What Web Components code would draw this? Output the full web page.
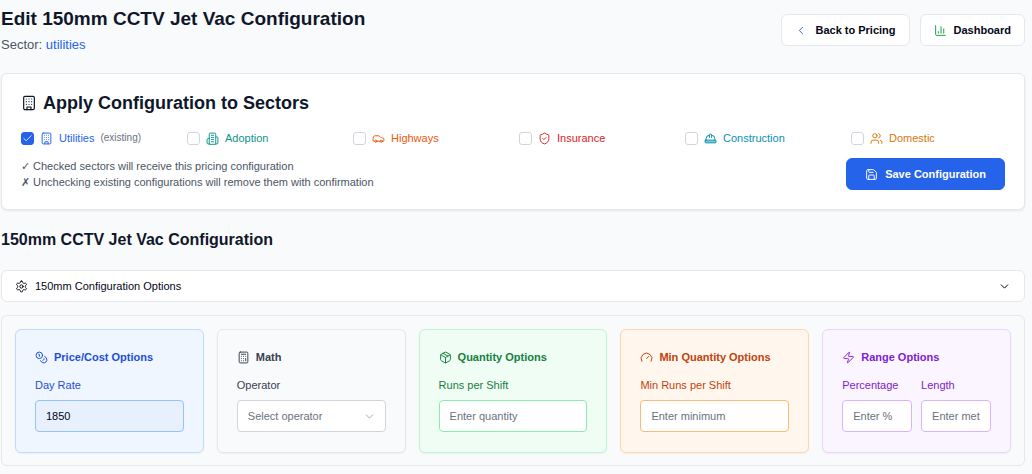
<!DOCTYPE html>
<html lang="en">
<head>
<meta charset="utf-8">
<meta name="viewport" content="width=device-width, initial-scale=1">
<title>Edit 150mm CCTV Jet Vac Configuration</title>
<style>
  body { margin: 0; background: #f9fafc; color: #0f172a; font: 11px/16px "Liberation Sans", Arial, sans-serif; }
</style>
</head>
<body>
<pricing-page></pricing-page>

<template id="pricing-page">
  <style>
    :host { display: block; padding: 8px 7px 8px 1px; }
    header { display: flex; justify-content: space-between; align-items: flex-start; margin-bottom: 20px; }
    h1 { margin: 0; font-size: 19px; line-height: 22px; }
    header p { margin: 6px 0 0; font-size: 13px; line-height: 17px; color: #4b5563; }
    header p a { color: #2563eb; text-decoration: none; }
    nav { display: flex; gap: 10px; padding-top: 6px; }
    h2 { margin: 20px 0; font-size: 16px; line-height: 20px; }
    .options { display: grid; grid-template-columns: repeat(5, minmax(0, 1fr)); gap: 13px; margin-top: 13px;
      padding: 13px 13px 12px; border: 1px solid #e5e7eb; border-radius: 6px; }
  </style>
  <header>
    <div>
      <h1>Edit 150mm CCTV Jet Vac Configuration</h1>
      <p>Sector: <a href="#utilities">utilities</a></p>
    </div>
    <nav>
      <action-button icon="chevron-left" style="--icon: #2563eb">Back to Pricing</action-button>
      <action-button icon="chart" style="--icon: #16a34a">Dashboard</action-button>
    </nav>
  </header>
  <main>
    <sector-panel>
      <sector-option icon="building" label="Utilities" note="(existing)" checked style="--tone: #2563eb"></sector-option>
      <sector-option icon="building-2" label="Adoption" style="--tone: #0d9488"></sector-option>
      <sector-option icon="car" label="Highways" style="--tone: #ea580c"></sector-option>
      <sector-option icon="shield" label="Insurance" style="--tone: #dc2626"></sector-option>
      <sector-option icon="hard-hat" label="Construction" style="--tone: #0891b2"></sector-option>
      <sector-option icon="users" label="Domestic" style="--tone: #d97706"></sector-option>
    </sector-panel>
    <h2>150mm CCTV Jet Vac Configuration</h2>
    <config-toggle>150mm Configuration Options</config-toggle>
    <section class="options">
      <option-card icon="coins" heading="Price/Cost Options" style="--tone: #1d4ed8; --fill: #eff6ff; --edge: #bfdbfe; --field-edge: #93c5fd; --field-fill: #e8f0fe">
        <option-field label="Day Rate" value="1850"></option-field>
      </option-card>
      <option-card icon="calculator" heading="Math" style="--tone: #374151; --fill: #f9fafb; --edge: #e5e7eb; --field-edge: #d1d5db">
        <option-select label="Operator" placeholder="Select operator"></option-select>
      </option-card>
      <option-card icon="package" heading="Quantity Options" style="--tone: #15803d; --fill: #f0fdf4; --edge: #bbf7d0; --field-edge: #86efac">
        <option-field label="Runs per Shift" placeholder="Enter quantity"></option-field>
      </option-card>
      <option-card icon="gauge" heading="Min Quantity Options" style="--tone: #c2410c; --fill: #fff7ed; --edge: #fed7aa; --field-edge: #fdba74">
        <option-field label="Min Runs per Shift" placeholder="Enter minimum"></option-field>
      </option-card>
      <option-card icon="zap" heading="Range Options" style="--tone: #7e22ce; --fill: #faf5ff; --edge: #e9d5ff; --field-edge: #d8b4fe">
        <option-field label="Percentage" placeholder="Enter %"></option-field>
        <option-field label="Length" placeholder="Enter meters"></option-field>
      </option-card>
    </section>
  </main>
</template>

<template id="action-button">
  <style>
    :host { display: block; }
    button { display: flex; align-items: center; gap: 7px; height: 32px; padding: 0 13px; border: 1px solid #e5e7eb;
      border-radius: 6px; background: #fff; color: #020617; font: bold 11px/16px "Liberation Sans", Arial, sans-serif; white-space: nowrap; }
    ui-icon { color: var(--icon); }
    :host([primary]) button { padding: 0 18px; border-color: #2563eb; background: #2563eb; color: #fff; }
  </style>
  <button type="button"><ui-icon></ui-icon><slot></slot></button>
</template>

<template id="sector-panel">
  <style>
    :host { display: block; padding: 19px; border: 1px solid #e5e7eb; border-radius: 6px; background: #fff; box-shadow: 0 1px 2px rgb(0 0 0 / 8%); }
    h2 { display: flex; align-items: center; gap: 6px; margin: 0 0 17px; font-size: 18px; line-height: 20px; }
    ui-icon { --size: 16px; }
    .sectors { display: grid; grid-template-columns: repeat(6, minmax(0, 1fr)); gap: 12px; }
    .foot { display: flex; justify-content: space-between; align-items: flex-start; margin-top: 12px; }
    .foot p { margin: 0; color: #4b5563; }
  </style>
  <h2><ui-icon name="building"></ui-icon>Apply Configuration to Sectors</h2>
  <div class="sectors"><slot></slot></div>
  <div class="foot">
    <div>
      <p>✓ Checked sectors will receive this pricing configuration</p>
      <p>✗ Unchecking existing configurations will remove them with confirmation</p>
    </div>
    <action-button primary icon="save">Save Configuration</action-button>
  </div>
</template>

<template id="sector-option">
  <style>
    :host { display: block; color: var(--tone); }
    label { display: flex; align-items: center; gap: 6px; line-height: 16px; white-space: nowrap; }
    .box { display: grid; }
    input, .box ui-icon { grid-area: 1 / 1; }
    input { appearance: none; box-sizing: border-box; width: 13px; height: 13px; margin: 0; border: 1px solid #d1d5db; border-radius: 3px; background: #fff; }
    input:checked { border-color: #2563eb; background: #2563eb; }
    .box ui-icon { --size: 11px; place-self: center; color: #fff; visibility: hidden; pointer-events: none; }
    input:checked + ui-icon { visibility: visible; }
    small { font-size: 10px; color: #6b7280; }
  </style>
  <label><span class="box"><input type="checkbox"><ui-icon name="check"></ui-icon></span><ui-icon class="mark"></ui-icon><span class="name"></span><small></small></label>
</template>

<template id="config-toggle">
  <style>
    :host { display: block; }
    button { display: flex; align-items: center; gap: 7px; width: 100%; height: 32px; padding: 0 13px; border: 1px solid #e5e7eb;
      border-radius: 6px; background: #fff; color: #020617; font: 11px/16px "Liberation Sans", Arial, sans-serif; text-align: left; }
    span { flex: 1; }
  </style>
  <button type="button" aria-expanded="true"><ui-icon name="settings"></ui-icon><span><slot></slot></span><ui-icon name="chevron-down"></ui-icon></button>
</template>

<template id="option-card">
  <style>
    :host { display: block; padding: 19px 19px 20px; border: 1px solid var(--edge); border-radius: 6px; background: var(--fill);
      color: var(--tone); box-shadow: 0 1px 2px rgb(0 0 0 / 5%); }
    h3 { display: flex; align-items: center; gap: 6px; margin: 0 0 12px; font-size: 11px; line-height: 16px; white-space: nowrap; }
    .fields { display: grid; grid-auto-flow: column; grid-auto-columns: minmax(0, 1fr); gap: 9px; }
  </style>
  <h3><ui-icon></ui-icon><span></span></h3>
  <div class="fields"><slot></slot></div>
</template>

<template id="option-field">
  <style>
    :host { display: block; }
    label { display: block; margin-bottom: 7px; line-height: 16px; }
    input { display: block; box-sizing: border-box; width: 100%; height: 32px; padding: 0 10px; border: 1px solid var(--field-edge);
      border-radius: 4px; background: var(--field-fill, #fff); color: #020617; font: 11px/16px "Liberation Sans", Arial, sans-serif; }
    input::placeholder { color: #6b7280; }
  </style>
  <label for="field"></label>
  <input id="field" type="text">
</template>

<template id="option-select">
  <style>
    :host { display: block; }
    label { display: block; margin-bottom: 7px; line-height: 16px; }
    .wrap { display: grid; align-items: center; }
    select, ui-icon { grid-area: 1 / 1; }
    select { appearance: none; box-sizing: border-box; width: 100%; height: 32px; padding: 0 10px; border: 1px solid var(--field-edge);
      border-radius: 4px; background: #fff; color: #6b7280; font: 11px/16px "Liberation Sans", Arial, sans-serif; }
    ui-icon { justify-self: end; margin-right: 10px; color: #a3a8b0; pointer-events: none; }
  </style>
  <label for="field"></label>
  <div class="wrap"><select id="field"><option></option></select><ui-icon name="chevron-down"></ui-icon></div>
</template>

<script>
const ICONS = {
  'chevron-left': '<path d="m14 18-6-6 6-6"/>',
  'chevron-down': '<path d="m6 9 6 6 6-6"/>',
  check: '<path d="M20 6 9 17l-5-5"/>',
  chart: '<path d="M3 3v16a2 2 0 0 0 2 2h16M18 17V9M13 17V5M8 17v-3"/>',
  building: '<rect width="16" height="20" x="4" y="2" rx="2"/><path d="M9 22v-4h6v4M8 6h.01M16 6h.01M12 6h.01M12 10h.01M12 14h.01M16 10h.01M16 14h.01M8 10h.01M8 14h.01"/>',
  'building-2': '<path d="M6 22V4a2 2 0 0 1 2-2h8a2 2 0 0 1 2 2v18ZM6 12H4a2 2 0 0 0-2 2v6a2 2 0 0 0 2 2h2M18 9h2a2 2 0 0 1 2 2v9a2 2 0 0 1-2 2h-2M10 6h4M10 10h4M10 14h4M10 18h4"/>',
  car: '<path d="M19 17h2c.6 0 1-.4 1-1v-3c0-.9-.7-1.7-1.5-1.9C18.7 10.6 16 10 16 10s-1.3-1.4-2.2-2.3c-.5-.4-1.1-.7-1.8-.7H5c-.6 0-1.1.4-1.4.9l-1.4 2.9A3.7 3.7 0 0 0 2 12v4c0 .6.4 1 1 1h2M9 17h6"/><circle cx="7" cy="17" r="2"/><circle cx="17" cy="17" r="2"/>',
  shield: '<path d="M20 13c0 5-3.5 7.5-7.66 8.95a1 1 0 0 1-.67-.01C7.5 20.5 4 18 4 13V6a1 1 0 0 1 1-1c2 0 4.5-1.2 6.24-2.72a1.17 1.17 0 0 1 1.52 0C14.51 3.81 17 5 19 5a1 1 0 0 1 1 1z"/><path d="m9 12 2 2 4-4"/>',
  'hard-hat': '<path d="M10 10V5a1 1 0 0 1 1-1h2a1 1 0 0 1 1 1v5M14 6a6 6 0 0 1 6 6v3M4 15v-3a6 6 0 0 1 6-6"/><rect x="2" y="15" width="20" height="5" rx="1" fill="currentColor" fill-opacity=".5"/>',
  users: '<path d="M16 21v-2a4 4 0 0 0-4-4H6a4 4 0 0 0-4 4v2"/><circle cx="9" cy="7" r="4"/><path d="M22 21v-2a4 4 0 0 0-3-3.87M16 3.13a4 4 0 0 1 0 7.75"/>',
  save: '<path d="M15.2 3a2 2 0 0 1 1.4.6l3.8 3.8a2 2 0 0 1 .6 1.4V19a2 2 0 0 1-2 2H5a2 2 0 0 1-2-2V5a2 2 0 0 1 2-2z"/><path d="M17 21v-7a1 1 0 0 0-1-1H8a1 1 0 0 0-1 1v7M7 3v4a1 1 0 0 0 1 1h7"/>',
  settings: '<path d="M12.22 2h-.44a2 2 0 0 0-2 2v.18a2 2 0 0 1-1 1.73l-.43.25a2 2 0 0 1-2 0l-.15-.08a2 2 0 0 0-2.73.73l-.22.38a2 2 0 0 0 .73 2.73l.15.1a2 2 0 0 1 1 1.72v.51a2 2 0 0 1-1 1.74l-.15.09a2 2 0 0 0-.73 2.73l.22.38a2 2 0 0 0 2.73.73l.15-.08a2 2 0 0 1 2 0l.43.25a2 2 0 0 1 1 1.73V20a2 2 0 0 0 2 2h.44a2 2 0 0 0 2-2v-.18a2 2 0 0 1 1-1.73l.43-.25a2 2 0 0 1 2 0l.15.08a2 2 0 0 0 2.73-.73l.22-.39a2 2 0 0 0-.73-2.73l-.15-.08a2 2 0 0 1-1-1.74v-.5a2 2 0 0 1 1-1.74l.15-.09a2 2 0 0 0 .73-2.73l-.22-.38a2 2 0 0 0-2.73-.73l-.15.08a2 2 0 0 1-2 0l-.43-.25a2 2 0 0 1-1-1.73V4a2 2 0 0 0-2-2z"/><circle cx="12" cy="12" r="3"/>',
  coins: '<circle cx="8" cy="8" r="6"/><path d="M18.09 10.37A6 6 0 1 1 10.34 18M7 6h1v4M16.71 13.88l.7.71-2.82 2.82"/>',
  calculator: '<rect width="16" height="20" x="4" y="2" rx="2"/><path d="M8 6h8M16 14v4M16 10h.01M12 10h.01M8 10h.01M12 14h.01M8 14h.01M12 18h.01M8 18h.01"/>',
  package: '<path d="M11 21.73a2 2 0 0 0 2 0l7-4A2 2 0 0 0 21 16V8a2 2 0 0 0-1-1.73l-7-4a2 2 0 0 0-2 0l-7 4A2 2 0 0 0 3 8v8a2 2 0 0 0 1 1.73zM12 22V12M3.3 7l8.7 5 8.7-5M7.5 4.27l9 5.15"/>',
  gauge: '<path d="m12 14 4-4M3.34 19a10 10 0 1 1 17.32 0"/>',
  zap: '<path d="M4 14a1 1 0 0 1-.78-1.63l9.9-10.2a.5.5 0 0 1 .86.46l-1.92 6.02A1 1 0 0 0 13 10h7a1 1 0 0 1 .78 1.63l-9.9 10.2a.5.5 0 0 1-.86-.46l1.92-6.02A1 1 0 0 0 11 14z"/>'
};

class UiIcon extends HTMLElement {
  static observedAttributes = ['name'];
  constructor() { super(); this.attachShadow({ mode: 'open' }); }
  connectedCallback() { this.draw(); }
  attributeChangedCallback() { this.draw(); }
  draw() {
    this.shadowRoot.innerHTML = `<style>
      :host { display: block; flex: none; width: var(--size, 13px); height: var(--size, 13px); }
      svg { display: block; width: 100%; height: 100%; }
    </style><svg viewBox="0 0 24 24" fill="none" stroke="currentColor" stroke-width="1.8" stroke-linecap="round" stroke-linejoin="round" aria-hidden="true">${ICONS[this.getAttribute('name')] || ''}</svg>`;
  }
}

class TemplateElement extends HTMLElement {
  connectedCallback() {
    if (this.shadowRoot) return;
    const root = this.attachShadow({ mode: 'open' });
    root.append(document.getElementById(this.localName).content.cloneNode(true));
    this.setup(root);
  }
  setup() {}
}

class PricingPage extends TemplateElement {}
class SectorPanel extends TemplateElement {}
class ConfigToggle extends TemplateElement {}

class ActionButton extends TemplateElement {
  setup(root) { root.querySelector('ui-icon').setAttribute('name', this.getAttribute('icon')); }
}

class SectorOption extends TemplateElement {
  setup(root) {
    root.querySelector('.mark').setAttribute('name', this.getAttribute('icon'));
    root.querySelector('.name').textContent = this.getAttribute('label');
    root.querySelector('small').textContent = this.getAttribute('note') || '';
    root.querySelector('input').checked = this.hasAttribute('checked');
  }
}

class OptionCard extends TemplateElement {
  setup(root) {
    root.querySelector('ui-icon').setAttribute('name', this.getAttribute('icon'));
    root.querySelector('h3 span').textContent = this.getAttribute('heading');
  }
}

class OptionField extends TemplateElement {
  setup(root) {
    root.querySelector('label').textContent = this.getAttribute('label');
    const input = root.querySelector('input');
    input.placeholder = this.getAttribute('placeholder') || '';
    input.value = this.getAttribute('value') || '';
  }
}

class OptionSelect extends TemplateElement {
  setup(root) {
    root.querySelector('label').textContent = this.getAttribute('label');
    root.querySelector('option').textContent = this.getAttribute('placeholder');
  }
}

customElements.define('ui-icon', UiIcon);
customElements.define('action-button', ActionButton);
customElements.define('sector-option', SectorOption);
customElements.define('sector-panel', SectorPanel);
customElements.define('config-toggle', ConfigToggle);
customElements.define('option-field', OptionField);
customElements.define('option-select', OptionSelect);
customElements.define('option-card', OptionCard);
customElements.define('pricing-page', PricingPage);
</script>
</body>
</html>
